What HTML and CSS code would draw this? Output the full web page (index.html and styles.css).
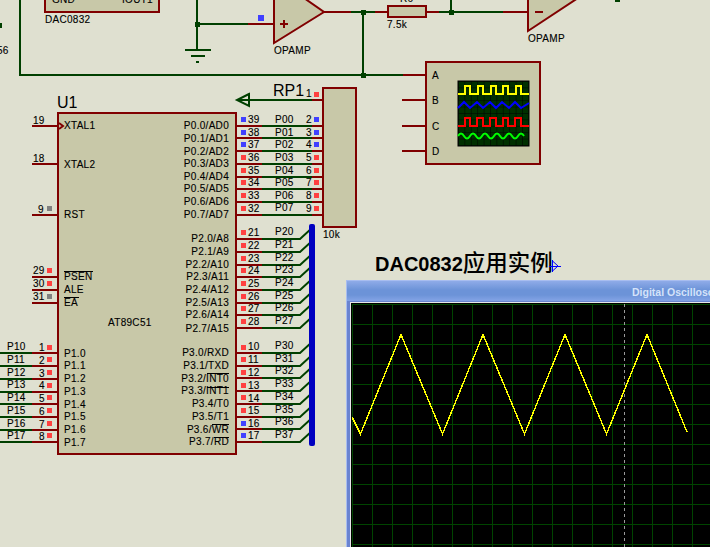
FILE: index.html
```html
<!DOCTYPE html>
<html lang="en">
<head>
<meta charset="utf-8">
<title>DAC0832 schematic</title>
<link rel="stylesheet" href="styles.css">
</head>
<body>
<main class="stage">
<svg class="schematic" width="710" height="547" viewBox="0 0 710 547">
  <defs>
    <pattern id="scopegrid" width="6.4" height="6.4" patternUnits="userSpaceOnUse" x="458" y="81">
      <path class="scope-cell" d="M0 0H6.4M0 0V6.4"/>
    </pattern>
  </defs>

  <!-- component bodies -->
  <rect class="body" x="45" y="-10" width="114" height="22"/>
  <path class="body" d="M274 -2V43L324 12L304 -2Z"/>
  <path class="body" d="M528 -2V31L578 -2Z"/>
  <rect class="body" x="388" y="6" width="38" height="11"/>
  <rect class="body" x="426" y="62" width="114" height="102"/>
  <rect class="body" x="58" y="113" width="178" height="341"/>
  <rect class="body" x="323" y="88" width="33" height="139"/>

  <!-- green wires -->
  <path class="wire" d="M20 -2V75H403M197 -2V49M197 24H248M351 12H375M363 12V75M439 12H503M451 -2V12"/>
  <path class="wire" d="M185 50H211M191 56H205M196 62H199"/>
  <path class="wire" d="M0 353H32M0 366H32M0 379H32M0 392H32M0 404H32M0 417H32M0 430H32M0 442H32"/>
  <path class="wire" d="M262 126H312M262 138H312M262 151H312M262 164H312M262 177H312M262 189H312M262 202H312M262 215H312"/>
  <path class="wire" d="M237 100H312"/>
  <path class="wire-d" d="M249 94L237 100L249 106Z"/>
  <path class="wire-d" d="M262 239H300L312 228M262 252H300L312 241M262 265H300L312 254M262 277H300L312 266M262 290H300L312 279M262 303H300L312 292M262 315H300L312 304M262 328H300L312 317"/>
  <path class="wire-d" d="M262 353H300L312 342M262 366H300L312 355M262 378H300L312 367M262 391H300L312 380M262 404H300L312 393M262 417H300L312 406M262 429H300L312 418M262 442H300L312 431"/>
  <rect class="bus" x="309" y="224" width="6" height="222" rx="2"/>
  <path class="dot" d="M195 22h5v5h-5zM361 10h5v5h-5zM449 10h5v5h-5zM361 73h5v5h-5zM615 -2h5v4h-5zM-2 23h4v5h-4z"/>

  <!-- red pins and outlines -->
  <path class="pin" d="M248 24H274M324 12H351M375 12H388M426 12H439M503 12H528M403 75H426M402 100H426M402 126H426M402 151H426"/>
  <path class="pin" d="M32 126H58M32 164H58M32 215H58M32 277H58M32 290H58M32 303H58"/>
  <path class="pin" d="M32 353H58M32 366H58M32 379H58M32 392H58M32 404H58M32 417H58M32 430H58M32 442H58"/>
  <path class="pin" d="M236 126H262M236 138H262M236 151H262M236 164H262M236 177H262M236 189H262M236 202H262M236 215H262"/>
  <path class="pin" d="M236 239H262M236 252H262M236 265H262M236 277H262M236 290H262M236 303H262M236 315H262M236 328H262"/>
  <path class="pin" d="M236 353H262M236 366H262M236 378H262M236 391H262M236 404H262M236 417H262M236 429H262M236 442H262"/>
  <path class="pin" d="M312 100H323M312 126H323M312 138H323M312 151H323M312 164H323M312 177H323M312 189H323M312 202H323M312 215H323"/>
  <path class="pin" d="M280 24H288M284 20V28M535 12H543"/>
  <path class="pin-d" d="M59 123L63 126L59 129"/>

  <!-- pin state squares -->
  <path class="sq-red" d="M314 92h5v5h-5zM47 268h5v5h-5zM47 281h5v5h-5zM47 345h5v5h-5zM47 357h5v5h-5zM47 370h5v5h-5zM47 383h5v5h-5zM47 395h5v5h-5zM47 408h5v5h-5zM47 421h5v5h-5zM47 433h5v5h-5z"/>
  <path class="sq-red" d="M241 155h5v5h-5zM241 168h5v5h-5zM241 180h5v5h-5zM241 193h5v5h-5zM241 206h5v5h-5zM314 155h5v5h-5zM314 168h5v5h-5zM314 180h5v5h-5zM314 193h5v5h-5zM314 206h5v5h-5z"/>
  <path class="sq-red" d="M241 230h5v5h-5zM241 243h5v5h-5zM241 256h5v5h-5zM241 268h5v5h-5zM241 281h5v5h-5zM241 294h5v5h-5zM241 306h5v5h-5zM241 319h5v5h-5zM241 345h5v5h-5zM241 357h5v5h-5zM241 370h5v5h-5zM241 383h5v5h-5zM241 395h5v5h-5zM241 408h5v5h-5z"/>
  <path class="sq-blue" d="M258 15h6v6h-6zM241 117h5v5h-5zM241 130h5v5h-5zM241 142h5v5h-5zM314 117h5v5h-5zM314 130h5v5h-5zM314 142h5v5h-5zM241 421h5v5h-5zM241 433h5v5h-5z"/>
  <path class="sq-grey" d="M47 206h5v5h-5zM47 294h5v5h-5z"/>

  <!-- virtual oscilloscope face -->
  <rect class="scope-face" x="458" y="81" width="71" height="65"/>
  <rect class="scope-cells" x="458" y="81" width="71" height="65" fill="url(#scopegrid)"/>
  <path class="tr tr-y" d="M458 94H465V86H470V94H478V86H483V94H491V86H496V94H503V86H508V94H516V86H521V94H529"/>
  <path class="tr tr-b" d="M458 108L464 102L470 108L477 102L483 108L490 102L496 108L502 102L509 108L515 102L521 108L529 103"/>
  <path class="tr tr-r" d="M458 126H465V118H470V126H477V118H483V126H490V118H496V126H503V118H508V126H515V118H521V126H529"/>
  <path class="tr tr-g" d="M458 136q3 -5 6 0q3 5 6 0q3 -5 6 0q3 5 6 0q3 -5 6 0q3 5 6 0q3 -5 6 0q3 5 6 0q3 -5 6 0q3 5 6 0q3 -5 6 0"/>

  <!-- overlines -->
  <path class="bar" d="M64 271.5H93M64 297.5H79M207 373.5H229M207 387.5H229M212 424.5H229M214 437.5H229"/>

  <!-- labels -->
  <g class="t">
    <text x="52" y="3">GND</text><text x="122" y="3">IOUT1</text>
    <text x="45" y="23">DAC0832</text><text x="274" y="54">OPAMP</text><text x="528" y="42">OPAMP</text>
    <text x="-3" y="54">56</text><text x="400" y="2">R6</text><text x="387" y="28">7.5k</text>
    <text x="323" y="238">10k</text>
    <text x="432" y="79">A</text><text x="432" y="104">B</text><text x="432" y="130">C</text><text x="432" y="155">D</text>
    <text x="64" y="129">XTAL1</text><text x="64" y="168">XTAL2</text><text x="64" y="218">RST</text>
    <text x="64" y="280">PSEN</text><text x="64" y="293">ALE</text><text x="64" y="306">EA</text>
    <text x="108" y="326">AT89C51</text>
    <text x="64" y="357">P1.0</text><text x="64" y="369">P1.1</text><text x="64" y="382">P1.2</text><text x="64" y="395">P1.3</text>
    <text x="64" y="408">P1.4</text><text x="64" y="420">P1.5</text><text x="64" y="433">P1.6</text><text x="64" y="446">P1.7</text>
    <text x="33" y="124">19</text><text x="33" y="162">18</text><text x="38" y="213">9</text>
    <text x="33" y="274">29</text><text x="33" y="287">30</text><text x="33" y="300">31</text>
    <text x="39" y="351">1</text><text x="39" y="364">2</text><text x="39" y="377">3</text><text x="39" y="389">4</text>
    <text x="39" y="402">5</text><text x="39" y="415">6</text><text x="39" y="428">7</text><text x="39" y="440">8</text>
    <text x="7" y="350">P10</text><text x="7" y="363">P11</text><text x="7" y="376">P12</text><text x="7" y="388">P13</text>
    <text x="7" y="401">P14</text><text x="7" y="414">P15</text><text x="7" y="427">P16</text><text x="7" y="439">P17</text>
    <text x="248" y="123">39</text><text x="248" y="136">38</text><text x="248" y="148">37</text><text x="248" y="161">36</text>
    <text x="248" y="174">35</text><text x="248" y="186">34</text><text x="248" y="199">33</text><text x="248" y="212">32</text>
    <text x="275" y="123">P00</text><text x="275" y="136">P01</text><text x="275" y="148">P02</text><text x="275" y="161">P03</text>
    <text x="275" y="174">P04</text><text x="275" y="186">P05</text><text x="275" y="199">P06</text><text x="275" y="211">P07</text>
    <text x="306" y="97">1</text><text x="306" y="123">2</text><text x="306" y="136">3</text><text x="306" y="148">4</text><text x="306" y="161">5</text>
    <text x="306" y="174">6</text><text x="306" y="186">7</text><text x="306" y="199">8</text><text x="306" y="212">9</text>
    <text x="248" y="236">21</text><text x="248" y="249">22</text><text x="248" y="262">23</text><text x="248" y="274">24</text>
    <text x="248" y="287">25</text><text x="248" y="300">26</text><text x="248" y="312">27</text><text x="248" y="325">28</text>
    <text x="275" y="235">P20</text><text x="275" y="248">P21</text><text x="275" y="261">P22</text><text x="275" y="273">P23</text>
    <text x="275" y="286">P24</text><text x="275" y="299">P25</text><text x="275" y="311">P26</text><text x="275" y="324">P27</text>
    <text x="248" y="350">10</text><text x="248" y="363">11</text><text x="248" y="376">12</text><text x="248" y="389">13</text>
    <text x="248" y="402">14</text><text x="248" y="414">15</text><text x="248" y="427">16</text><text x="248" y="439">17</text>
    <text x="275" y="349">P30</text><text x="275" y="362">P31</text><text x="275" y="374">P32</text><text x="275" y="387">P33</text>
    <text x="275" y="400">P34</text><text x="275" y="413">P35</text><text x="275" y="425">P36</text><text x="275" y="438">P37</text>
  </g>
  <g class="t t-end">
    <text x="229" y="129">P0.0/AD0</text><text x="229" y="142">P0.1/AD1</text><text x="229" y="155">P0.2/AD2</text><text x="229" y="167">P0.3/AD3</text>
    <text x="229" y="180">P0.4/AD4</text><text x="229" y="192">P0.5/AD5</text><text x="229" y="205">P0.6/AD6</text><text x="229" y="218">P0.7/AD7</text>
    <text x="229" y="242">P2.0/A8</text><text x="229" y="255">P2.1/A9</text><text x="229" y="268">P2.2/A10</text><text x="229" y="280">P2.3/A11</text>
    <text x="229" y="293">P2.4/A12</text><text x="229" y="306">P2.5/A13</text><text x="229" y="318">P2.6/A14</text><text x="229" y="332">P2.7/A15</text>
    <text x="229" y="356">P3.0/RXD</text><text x="229" y="369">P3.1/TXD</text><text x="229" y="382">P3.2/INT0</text><text x="229" y="394">P3.3/INT1</text>
    <text x="229" y="407">P3.4/T0</text><text x="229" y="420">P3.5/T1</text><text x="229" y="433">P3.6/WR</text><text x="229" y="445">P3.7/RD</text>
  </g>
  <g class="t t-big">
    <text x="57" y="108">U1</text><text x="273" y="96">RP1</text>
  </g>

  <text class="title" x="375" y="271">DAC0832<tspan class="title-cjk">应用实例</tspan></text>
  <path class="cursor" d="M552.5 260V272M552.5 261L558 266L552.5 271M549 266.5H561"/>
</svg>

<section class="scope-window">
  <header class="scope-title">Digital Oscilloscope</header>
  <svg class="scope-screen" width="358" height="243" viewBox="352 304 358 243">
    <defs>
      <pattern id="grid" width="20" height="20" patternUnits="userSpaceOnUse" x="352" y="304">
        <path class="grid-line" d="M.5 0V20M0 .5H20"/>
      </pattern>
    </defs>
    <rect x="352" y="304" width="358" height="243" fill="url(#grid)"/>
    <path class="scope-cursor" d="M624.5 304V547"/>
    <path class="wave" d="M352 417L360.5 434L401 334.5L442.5 434L483 334.5L524.5 434L565 334.5L606.5 434L647 334.5L687 432"/>
  </svg>
</section>
</main>
</body>
</html>
```

FILE: styles.css
```css
html, body {
  margin: 0;
  padding: 0;
  background: #dfe0d0;
}

.stage {
  position: relative;
  width: 710px;
  height: 547px;
  overflow: hidden;
  background: #dfe0d0;
}

.schematic {
  display: block;
}

.body {
  fill: #c8c8a8;
  stroke: #800000;
  stroke-width: 2;
  shape-rendering: crispEdges;
}

path.body {
  shape-rendering: auto;
}

.wire, .pin, .bar {
  fill: none;
  shape-rendering: crispEdges;
}

.wire {
  stroke: #004000;
  stroke-width: 2;
}

.wire-d {
  fill: none;
  stroke: #004000;
  stroke-width: 2;
}

.bus {
  fill: #0000c0;
}

.dot {
  fill: #004000;
}

.pin {
  stroke: #800000;
  stroke-width: 2;
}

.pin-d {
  fill: none;
  stroke: #800000;
  stroke-width: 2;
}

.sq-red {
  fill: #ff4040;
}

.sq-blue {
  fill: #4040ff;
}

.sq-grey {
  fill: #808080;
}

.scope-face {
  fill: #003000;
  stroke: #000000;
  stroke-width: 1;
}

.scope-cell {
  fill: none;
  stroke: #000000;
  stroke-width: 1;
}

.tr {
  fill: none;
  stroke-width: 2;
}

.tr-y { stroke: #ffff00; }
.tr-b { stroke: #0000ff; }
.tr-r { stroke: #ff0000; }
.tr-g { stroke: #00ff00; }

.bar {
  stroke: #000000;
  stroke-width: 1;
}

.t {
  font-family: "Liberation Sans", Arial, sans-serif;
  font-size: 10px;
  letter-spacing: 0.3px;
  fill: #000000;
  stroke: #000000;
  stroke-width: 0.12;
}

.t-end {
  text-anchor: end;
}

.t-big {
  font-size: 16px;
  letter-spacing: 0;
  stroke-width: 0;
}

.title {
  font-family: "Liberation Sans", Arial, sans-serif;
  font-size: 20px;
  font-weight: 700;
  fill: #000000;
}

.title-cjk {
  font-family: "Noto Sans CJK SC", sans-serif;
  font-size: 22.5px;
  font-weight: 500;
}

.cursor {
  fill: none;
  stroke: #0000ff;
  stroke-width: 1;
}

.scope-window {
  position: absolute;
  left: 346px;
  top: 280px;
  width: 380px;
  height: 280px;
  box-sizing: border-box;
  border: 1px solid #a8bdf0;
  border-right: 0;
  border-bottom: 0;
  background: #6a84d0;
}

.scope-title {
  height: 20px;
  box-sizing: border-box;
  padding: 4px 0 0 285px;
  font-family: "Liberation Sans", Arial, sans-serif;
  font-size: 10.5px;
  font-weight: 700;
  line-height: 14px;
  white-space: nowrap;
  color: #d5e3fa;
  background: linear-gradient(#8fabe8 0, #6c93d8 45%, #6c93d8 70%, #84a4e6 100%);
}

.scope-screen {
  display: block;
  position: absolute;
  left: 5px;
  top: 23px;
  background: #000000;
  outline: 1px solid #000000;
  box-shadow: 0 0 0 2px #e8e8e8;
}

.grid-line {
  fill: none;
  stroke: #004400;
  stroke-width: 1;
}

.scope-cursor {
  fill: none;
  stroke: #9a9a9a;
  stroke-width: 1;
  stroke-dasharray: 3 3;
}

.wave {
  fill: none;
  stroke: #ffff00;
  stroke-width: 1.4;
  shape-rendering: crispEdges;
}
```
